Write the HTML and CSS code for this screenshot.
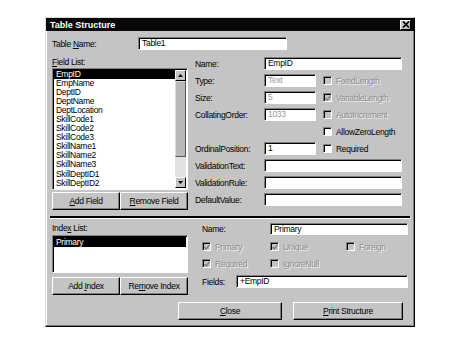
FILE: index.html
```html
<!DOCTYPE html>
<html lang="en">
<head>
  <meta charset="UTF-8" />
  <title>Table Structure</title>
  <link rel="stylesheet" href="styles.css">
</head>
<body>
  <div class="dialog">
    <div class="titlebar">
      <span class="title">Table Structure</span>
      <span class="close-x">
        <svg width="8" height="7" viewBox="0 0 8 7"><path d="M1 0.5 L7 6.5 M7 0.5 L1 6.5" stroke="#000" stroke-width="1.6"/></svg>
      </span>
    </div>

    <div class="content">
      <div class="tname-row">
        <label class="tname-label">Table <u>N</u>ame:</label>
        <div class="edit tname-edit">Table1</div>
      </div>

      <div class="upper">
        <div class="list-col">
          <div class="cap"><u>F</u>ield List:</div>
          <div class="listbox fields-list">
            <div class="items">
              <div class="item sel">EmpID</div>
              <div class="item">EmpName</div>
              <div class="item">DeptID</div>
              <div class="item">DeptName</div>
              <div class="item">DeptLocation</div>
              <div class="item">SkillCode1</div>
              <div class="item">SkillCode2</div>
              <div class="item">SkillCode3</div>
              <div class="item">SkillName1</div>
              <div class="item">SkillName2</div>
              <div class="item">SkillName3</div>
              <div class="item">SkillDeptID1</div>
              <div class="item">SkillDeptID2</div>
            </div>
            <div class="vscroll">
              <div class="sb-btn"><svg width="5" height="3" viewBox="0 0 5 3"><path d="M2.5 0 L5 3 L0 3 Z" fill="#000"/></svg></div>
              <div class="sb-thumb"></div>
              <div class="sb-track"></div>
              <div class="sb-btn"><svg width="5" height="3" viewBox="0 0 5 3"><path d="M0 0 L5 0 L2.5 3 Z" fill="#000"/></svg></div>
            </div>
          </div>
          <div class="btn-pair">
            <div class="btn"><span><u>A</u>dd Field</span></div>
            <div class="btn"><span><u>R</u>emove Field</span></div>
          </div>
        </div>

        <div class="props">
          <div class="prow"><span class="plabel">Name:</span><div class="edit wide">EmpID</div></div>
          <div class="prow">
            <span class="plabel">Type:</span><div class="edit short off">Text</div>
            <span class="chk off"></span><span class="clabel off">FixedLength</span>
          </div>
          <div class="prow">
            <span class="plabel">Size:</span><div class="edit short off">5</div>
            <span class="chk off on"><svg width="6" height="6" viewBox="0 0 6 6"><path d="M0.5 3 L2.3 5 L5.5 0.8" stroke="#808080" stroke-width="1.4" fill="none"/></svg></span><span class="clabel off">VariableLength</span>
          </div>
          <div class="prow">
            <span class="plabel">CollatingOrder:</span><div class="edit short off">1033</div>
            <span class="chk off"></span><span class="clabel off">AutoIncrement</span>
          </div>
          <div class="prow">
            <span class="plabel"></span><div class="spacer short"></div>
            <span class="chk"></span><span class="clabel">AllowZeroLength</span>
          </div>
          <div class="prow">
            <span class="plabel">OrdinalPosition:</span><div class="edit short">1</div>
            <span class="chk"></span><span class="clabel">Required</span>
          </div>
          <div class="prow"><span class="plabel">ValidationText:</span><div class="edit wide"></div></div>
          <div class="prow"><span class="plabel">ValidationRule:</span><div class="edit wide"></div></div>
          <div class="prow"><span class="plabel">DefaultValue:</span><div class="edit wide"></div></div>
        </div>
      </div>

      <div class="sep"></div>

      <div class="lower">
        <div class="list-col idx-col">
          <div class="cap">Inde<u>x</u> List:</div>
          <div class="listbox index-list">
            <div class="items">
              <div class="item sel">Primary</div>
            </div>
          </div>
          <div class="btn-pair idx-btns">
            <div class="btn"><span>Add <u>I</u>ndex</span></div>
            <div class="btn"><span>Re<u>m</u>ove Index</span></div>
          </div>
        </div>

        <div class="iprops">
          <div class="irow"><span class="ilabel">Name:</span><div class="edit iname">Primary</div></div>
          <div class="irow chkrow">
            <span class="ccell c1"><span class="chk off on"><svg width="6" height="6" viewBox="0 0 6 6"><path d="M0.5 3 L2.3 5 L5.5 0.8" stroke="#808080" stroke-width="1.4" fill="none"/></svg></span><span class="clabel off">Primary</span></span>
            <span class="ccell c2"><span class="chk off on"><svg width="6" height="6" viewBox="0 0 6 6"><path d="M0.5 3 L2.3 5 L5.5 0.8" stroke="#808080" stroke-width="1.4" fill="none"/></svg></span><span class="clabel off">Unique</span></span>
            <span class="ccell"><span class="chk off"></span><span class="clabel off">Foreign</span></span>
          </div>
          <div class="irow chkrow">
            <span class="ccell c1"><span class="chk off on"><svg width="6" height="6" viewBox="0 0 6 6"><path d="M0.5 3 L2.3 5 L5.5 0.8" stroke="#808080" stroke-width="1.4" fill="none"/></svg></span><span class="clabel off">Required</span></span>
            <span class="ccell c2"><span class="chk off"></span><span class="clabel off">IgnoreNull</span></span>
          </div>
          <div class="irow fields-row"><span class="flabel">Fields:</span><div class="edit ifields">+EmpID</div></div>
        </div>
      </div>

      <div class="actions">
        <div class="btn close-btn"><span><u>C</u>lose</span></div>
        <div class="btn print-btn"><span><u>P</u>rint Structure</span></div>
      </div>
    </div>
  </div>
</body>
</html>
```

FILE: styles.css
```css
* {
  margin: 0;
  padding: 0;
  box-sizing: border-box;
}
body {
  background: #ffffff;
  font-family: 'Liberation Sans', Arial, sans-serif;
  font-size: 8.5px;
  letter-spacing: -0.3px;
  color: #000;
  padding: 17px 0 0 45px;
}
u {
  text-decoration: underline;
  text-underline-offset: 1px;
}

.dialog {
  width: 370px;
  height: 310px;
  background: #c4c4c4;
  border: 1px solid;
  border-color: #dcdcdc #000 #000 #dcdcdc;
  box-shadow: inset -1px -1px #808080, inset 1px 1px #fff;
}
.titlebar {
  height: 13px;
  background: #080808;
  color: #fff;
  display: flex;
  align-items: center;
  justify-content: space-between;
  padding: 0 3px 0 4px;
}
.title {
  font-weight: bold;
  font-size: 9px;
  letter-spacing: 0;
}
.close-x {
  width: 11px;
  height: 10px;
  background: #c4c4c4;
  border: 1px solid;
  border-color: #fff #000 #000 #fff;
  display: flex;
  align-items: center;
  justify-content: center;
}

.content {
  padding: 0 6px;
}

.edit {
  height: 13px;
  background: #fff;
  border: 1px solid;
  border-color: #808080 #fff #fff #808080;
  box-shadow: inset 1px 1px #000;
  padding: 0 2px 0 3px;
  line-height: 11px;
  white-space: nowrap;
  overflow: hidden;
}
.edit.off {
  color: #9a9a9a;
}

.tname-row {
  display: flex;
  align-items: center;
  margin-top: 6px;
}
.tname-label {
  width: 86px;
}
.tname-edit {
  width: 149px;
}

.upper {
  display: flex;
  gap: 7px;
  margin-top: 7px;
}
.list-col {
  width: 136px;
  display: flex;
  flex-direction: column;
}
.cap {
  height: 10px;
  line-height: 10px;
}
.listbox {
  background: #fff;
  border: 1px solid;
  border-color: #808080 #fff #fff #808080;
  box-shadow: inset 1px 1px #000;
  padding: 1px;
  display: flex;
  overflow: hidden;
}
.fields-list {
  height: 122px;
  margin-top: 1px;
}
.items {
  flex: 1;
  overflow: hidden;
}
.item {
  height: 9.05px;
  line-height: 9.05px;
  padding-left: 2px;
  white-space: nowrap;
}
.item.sel {
  background: #000;
  color: #fff;
}
.vscroll {
  width: 11px;
  display: flex;
  flex-direction: column;
}
.sb-btn {
  height: 11px;
  background: #c4c4c4;
  border: 1px solid;
  border-color: #fff #000 #000 #fff;
  display: flex;
  align-items: center;
  justify-content: center;
}
.sb-thumb {
  height: 76px;
  background: #b8b8b8;
  border: 1px solid;
  border-color: #dcdcdc #555 #555 #dcdcdc;
}
.sb-track {
  flex: 1;
  background: #e2e2e2;
}

.btn-pair {
  display: flex;
  margin-top: 2px;
}
.btn-pair .btn {
  flex: 1;
}
.btn {
  height: 18px;
  background: #c4c4c4;
  border: 1px solid;
  border-color: #fff #000 #000 #fff;
  box-shadow: inset -1px -1px #808080;
  display: flex;
  align-items: center;
  justify-content: center;
  white-space: nowrap;
}

.props {
  display: flex;
  flex-direction: column;
  gap: 4px;
}
.prow {
  height: 13px;
  display: flex;
  align-items: center;
}
.plabel {
  width: 69px;
}
.wide {
  width: 138px;
}
.short {
  width: 52px;
}
.spacer {
  height: 13px;
}
.chk {
  width: 9px;
  height: 9px;
  margin-left: 7px;
  margin-right: 4px;
  background: #fff;
  border: 1px solid;
  border-color: #808080 #fff #fff #808080;
  box-shadow: inset 1px 1px #000;
  display: flex;
  align-items: center;
  justify-content: center;
}
.chk.off {
  background: #c4c4c4;
}
.clabel.off {
  color: #8c8c8c;
  text-shadow: 1px 1px #f4f4f4;
}

.sep {
  margin: 6px -2px 0;
  height: 3px;
  background: #000;
  border-bottom: 1px solid #fff;
}

.lower {
  display: flex;
  gap: 14px;
}
.idx-col {
  padding-top: 4px;
}
.index-list {
  height: 38px;
  margin-top: 2px;
}
.index-list .item {
  height: 10px;
  line-height: 10px;
}
.idx-btns {
  margin-top: 4px;
}
.iprops {
  flex: 1;
  padding-top: 4px;
  display: flex;
  flex-direction: column;
}
.irow {
  display: flex;
  align-items: center;
  height: 12px;
}
.ilabel {
  width: 68px;
}
.iname {
  width: 138px;
  height: 12px;
}
.chkrow {
  margin-top: 6px;
  height: 11px;
}
.ccell {
  display: flex;
  align-items: center;
}
.ccell .chk {
  margin-left: 0;
}
.c1 {
  width: 68px;
}
.c2 {
  width: 76px;
}
.fields-row {
  margin-top: 6px;
  height: 13px;
}
.flabel {
  width: 34px;
}
.ifields {
  width: 172px;
}

.actions {
  display: flex;
  justify-content: flex-end;
  gap: 11px;
  margin-top: 7px;
  padding-right: 5px;
}
.close-btn {
  width: 104px;
}
.print-btn {
  width: 110px;
}
```
